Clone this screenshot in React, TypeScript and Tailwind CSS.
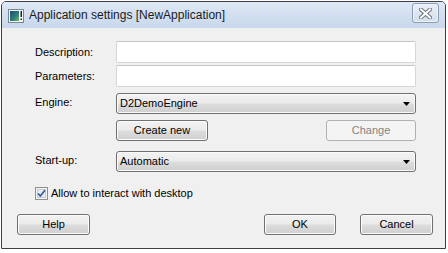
import React from 'react';

const font = { fontFamily: '"Liberation Sans", Arial, sans-serif' };

const btn =
  'flex items-center justify-center h-[21px] rounded-[3px] border border-[#707070] bg-[linear-gradient(to_bottom,#f2f2f2_0%,#ebebeb_48%,#dddddd_52%,#cfcfcf_100%)] text-[11px] text-black shadow-[inset_0_0_0_1px_#fcfcfc]';

function Button({ label, width, disabled }: { label: string; width: string; disabled?: boolean }) {
  if (disabled) {
    return (
      <div
        className={`flex items-center justify-center h-[21px] ${width} rounded-[3px] border border-[#adb2b5] bg-[#f4f4f4] text-[11px] text-[#838383]`}
      >
        {label}
      </div>
    );
  }
  return <div className={`${btn} ${width}`}>{label}</div>;
}

function Combo({ value, height }: { value: string; height: string }) {
  return (
    <div
      className={`flex items-center w-[300px] ${height} rounded-[3px] border border-[#707070] bg-[linear-gradient(to_bottom,#f2f2f2_0%,#ebebeb_48%,#dddddd_52%,#cfcfcf_100%)] pl-[3px] pr-[5px] text-[11px] text-black shadow-[inset_0_0_0_1px_#fafafa]`}
    >
      <span className="flex-1">{value}</span>
      <svg width="7" height="4" viewBox="0 0 7 4">
        <path d="M0 0h7L3.5 4z" fill="#000" />
      </svg>
    </div>
  );
}

function Field({ label }: { label: string }) {
  return (
    <div className="flex items-center">
      <span className="w-[81px] text-[11px]">{label}</span>
      <div className="w-[300px] h-[22px] rounded-[2px] border border-[#d6d6d6] border-t-[#c4c4c4] bg-white" />
    </div>
  );
}

function AppIcon() {
  return (
    <svg width="16" height="14" viewBox="0 0 16 14">
      <rect x="0.5" y="0.5" width="15" height="13" fill="#f4f6f8" stroke="#7a8592" />
      <rect x="2" y="2" width="9" height="10" fill="url(#g)" />
      <rect x="12.5" y="2" width="1.5" height="6" fill="#222" />
      <rect x="12.5" y="9.5" width="1.5" height="1.5" fill="#222" />
      <defs>
        <linearGradient id="g" x1="0" y1="0" x2="1" y2="1">
          <stop offset="0" stopColor="#1e4a72" />
          <stop offset="0.6" stopColor="#2f7f7a" />
          <stop offset="1" stopColor="#6fc05a" />
        </linearGradient>
      </defs>
    </svg>
  );
}

function CloseGlyph() {
  return (
    <svg width="13" height="11" viewBox="0 0 13 11">
      <path d="M2 1.5l9 8M11 1.5l-9 8" stroke="#6d7683" strokeWidth="4" strokeLinecap="square" />
      <path d="M2 1.5l9 8M11 1.5l-9 8" stroke="#ffffff" strokeWidth="2" strokeLinecap="square" />
    </svg>
  );
}

function CheckBox() {
  return (
    <svg width="13" height="13" viewBox="0 0 13 13">
      <rect x="0.5" y="0.5" width="12" height="12" fill="#f4f4f4" stroke="#8e8f8f" />
      <rect x="2.5" y="2.5" width="8" height="8" fill="#e9ecf0" stroke="#c8ccd2" />
      <path d="M3 6.5l2.3 2.5L10 3.3" fill="none" stroke="#3a5d9c" strokeWidth="1.8" />
    </svg>
  );
}

export default function App() {
  return (
    <div className="w-[448px] h-[253px] bg-white pt-[1px] pl-[1px]" style={font}>
      <div className="w-[445px] h-[248px] border border-[#3c4046] rounded-t-[5px] overflow-hidden flex flex-col">
        <div className="h-[26px] flex items-start bg-[linear-gradient(to_bottom,#dfe9f5_0%,#d2dff0_50%,#c8d8ec_100%)]">
          <div className="mt-[7px] ml-[6px]">
            <AppIcon />
          </div>
          <span className="mt-[6px] ml-[5px] text-[12px] text-[#1b1b1b] leading-[14px]">
            Application settings [NewApplication]
          </span>
          <div className="ml-auto mt-[1px] mr-[6px] w-[27px] h-[20px] rounded-[3px] border border-[#8d9bb0] bg-[linear-gradient(to_bottom,#e9eff7,#d3deec)] flex items-center justify-center shadow-[inset_0_0_0_1px_#eef3f9]">
            <CloseGlyph />
          </div>
        </div>
        <div className="flex-1 bg-[#f0f0f0] text-black pl-[33px] pt-[13px] flex flex-col">
          <Field label="Description:" />
          <div className="mt-[2px]">
            <Field label="Parameters:" />
          </div>
          <div className="mt-[6px] flex items-center">
            <span className="w-[81px] text-[11px] mb-[3px]">Engine:</span>
            <Combo value="D2DemoEngine" height="h-[21px]" />
          </div>
          <div className="mt-[6px] flex ml-[81px] w-[300px] justify-between">
            <Button label="Create new" width="w-[92px]" />
            <Button label="Change" width="w-[90px]" disabled />
          </div>
          <div className="mt-[10px] flex items-center">
            <span className="w-[81px] text-[11px] mb-[3px]">Start-up:</span>
            <Combo value="Automatic" height="h-[21px]" />
          </div>
          <div className="mt-[15px] flex items-center gap-[3px] h-[13px]">
            <CheckBox />
            <span className="text-[11px]">Allow to interact with desktop</span>
          </div>
          <div className="mt-[14px] flex -ml-[18px] pr-[12px]">
            <Button label="Help" width="w-[73px]" />
            <div className="ml-auto flex gap-[24px]">
              <Button label="OK" width="w-[72px]" />
              <Button label="Cancel" width="w-[73px]" />
            </div>
          </div>
        </div>
      </div>
    </div>
  );
}
